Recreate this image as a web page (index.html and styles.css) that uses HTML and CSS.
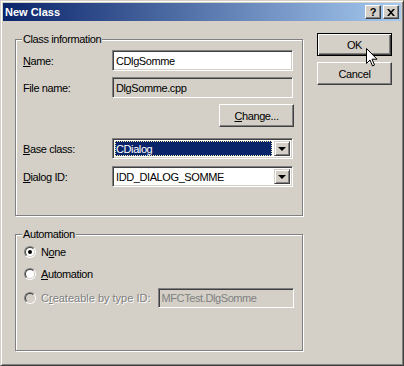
FILE: index.html
```html
<!DOCTYPE html>
<html lang="en">
<head>
    <meta charset="UTF-8">
    <meta name="viewport" content="width=device-width, initial-scale=1.0">
    <title>New Class</title>
    <link rel="stylesheet" href="styles.css">
</head>
<body>
    <div class="window">
        <div class="titlebar">
            <span class="title">New Class</span>
            <div class="caption-buttons">
                <span class="cap-btn help">?</span>
                <span class="cap-btn">
                    <svg width="8" height="7" viewBox="0 0 8 7"><path d="M0 0h2l2 2.3 2-2.3h2l-3 3.5 3 3.5h-2l-2-2.3-2 2.3h-2l3-3.5z" fill="#000"/></svg>
                </span>
            </div>
        </div>
        <div class="client">
            <div class="main">
                <fieldset class="group class-info">
                    <legend>Class information</legend>
                    <div class="row">
                        <span class="label"><u>N</u>ame:</span>
                        <div class="edit">CDlgSomme</div>
                    </div>
                    <div class="row row-file">
                        <span class="label">File name:</span>
                        <div class="edit readonly">DlgSomme.cpp</div>
                    </div>
                    <div class="row row-change">
                        <span class="button"><u>C</u>hange...</span>
                    </div>
                    <div class="row row-base">
                        <span class="label"><u>B</u>ase class:</span>
                        <div class="combo">
                            <span class="combo-text selected">CDialog</span>
                            <span class="drop-btn"><span class="arrow"></span></span>
                        </div>
                    </div>
                    <div class="row row-dialog">
                        <span class="label"><u>D</u>ialog ID:</span>
                        <div class="combo">
                            <span class="combo-text">IDD_DIALOG_SOMME</span>
                            <span class="drop-btn"><span class="arrow"></span></span>
                        </div>
                    </div>
                </fieldset>

                <fieldset class="group automation">
                    <legend>Automation</legend>
                    <div class="option">
                        <span class="radio"><span class="ring checked"></span></span>
                        <span>N<u>o</u>ne</span>
                    </div>
                    <div class="option">
                        <span class="radio"><span class="ring"></span></span>
                        <span><u>A</u>utomation</span>
                    </div>
                    <div class="option disabled">
                        <span class="radio"><span class="ring"></span></span>
                        <span class="option-label">C<u>r</u>eateable by type ID:</span>
                        <div class="edit readonly type-id">MFCTest.DlgSomme</div>
                    </div>
                </fieldset>
            </div>

            <div class="side">
                <span class="button default">OK</span>
                <span class="button">Cancel</span>
            </div>
        </div>

        <svg class="cursor" width="12" height="20" viewBox="0 0 12 20">
            <path d="M0.5 0.5v15l3.5-3.5 2.5 6 2-1-2.5-5.8h5z" fill="#fff" stroke="#000" stroke-width="1"/>
        </svg>
    </div>
</body>
</html>
```

FILE: styles.css
```css
body {
    margin: 0;
    background-color: #d4d0c8;
    font-family: "Liberation Sans", Arial, sans-serif;
    font-size: 11px;
    letter-spacing: -0.4px;
    color: #000;
}
u {
    text-decoration: underline;
    text-underline-offset: 1px;
}

.window {
    position: relative;
    width: 404px;
    height: 366px;
    box-sizing: border-box;
    padding: 2px;
    border: 1px solid;
    border-color: #d4d0c8 #404040 #404040 #d4d0c8;
    box-shadow: inset 1px 1px #fff, inset -1px -1px #808080;
    background-color: #d4d0c8;
    display: flex;
    flex-direction: column;
}

/* title bar */
.titlebar {
    height: 18px;
    flex-shrink: 0;
    display: flex;
    align-items: center;
    justify-content: space-between;
    padding: 0 2px 0 2px;
    margin-bottom: 1px;
    background: linear-gradient(to right, #0a246a, #a6caf0);
}
.title {
    color: #fff;
    font-weight: bold;
    letter-spacing: 0;
}
.caption-buttons {
    display: flex;
    gap: 2px;
}
.cap-btn {
    width: 16px;
    height: 14px;
    box-sizing: border-box;
    border: 1px solid;
    border-color: #fff #404040 #404040 #fff;
    box-shadow: inset -1px -1px #808080, inset 1px 1px #d4d0c8;
    background-color: #d4d0c8;
    display: flex;
    align-items: center;
    justify-content: center;
    font-weight: bold;
    font-size: 11px;
    line-height: 12px;
}

/* client area */
.client {
    flex: 1;
    display: flex;
    align-items: flex-start;
    gap: 14px;
    padding: 11px 9px 0 12px;
}
.main {
    width: 288px;
    display: flex;
    flex-direction: column;
    gap: 12px;
}
.side {
    width: 75px;
    display: flex;
    flex-direction: column;
    gap: 6px;
}

/* group boxes */
.group {
    margin: 0;
    min-width: 0;
    border: 1px solid #808080;
    box-shadow: inset 1px 1px #fff, 1px 1px #fff;
}
.group legend {
    padding: 0 1px;
    margin-left: -1px;
    line-height: 13px;
    background-color: #d4d0c8;
}
.class-info {
    padding: 4px 8px 28px 7px;
}
.automation {
    padding: 0 8px 42px 7px;
}

.row {
    display: flex;
    align-items: center;
}
.label {
    width: 89px;
    flex-shrink: 0;
}
.row-file {
    margin-top: 6px;
}
.row-change {
    margin-top: 6px;
    justify-content: flex-end;
}
.row-base {
    margin-top: 11px;
}
.row-dialog {
    margin-top: 7px;
}

/* sunken edit box */
.edit {
    width: 181px;
    height: 21px;
    box-sizing: border-box;
    padding: 0 3px;
    border: 1px solid;
    border-color: #808080 #fff #fff #808080;
    box-shadow: inset 1px 1px #404040, inset -1px -1px #d4d0c8;
    background-color: #fff;
    display: flex;
    align-items: center;
}
.edit.readonly {
    background-color: #d4d0c8;
}

/* combo box */
.combo {
    width: 181px;
    height: 21px;
    box-sizing: border-box;
    padding: 2px;
    border: 1px solid;
    border-color: #808080 #fff #fff #808080;
    box-shadow: inset 1px 1px #404040, inset -1px -1px #d4d0c8;
    background-color: #fff;
    display: flex;
}
.combo-text {
    flex: 1;
    display: flex;
    align-items: center;
    padding-left: 1px;
    margin-right: 2px;
}
.combo-text.selected {
    background-color: #0a246a;
    color: #fff;
    outline: 1px dotted #f2eeb0;
    outline-offset: -1px;
}
.drop-btn {
    width: 16px;
    box-sizing: border-box;
    border: 1px solid;
    border-color: #d4d0c8 #404040 #404040 #d4d0c8;
    box-shadow: inset 1px 1px #fff, inset -1px -1px #808080;
    background-color: #d4d0c8;
    display: flex;
    align-items: center;
    justify-content: center;
}
.arrow {
    width: 0;
    height: 0;
    border-left: 4px solid transparent;
    border-right: 4px solid transparent;
    border-top: 4px solid #000;
    margin-top: 1px;
}

/* push buttons */
.button {
    width: 75px;
    height: 23px;
    box-sizing: border-box;
    border: 1px solid;
    border-color: #fff #404040 #404040 #fff;
    box-shadow: inset -1px -1px #808080, inset 1px 1px #d4d0c8;
    background-color: #d4d0c8;
    display: flex;
    align-items: center;
    justify-content: center;
}
.button.default {
    border-color: #000;
    box-shadow: inset 1px 1px #fff, inset -1px -1px #404040, inset -2px -2px #808080;
}

/* radio options */
.option {
    display: flex;
    align-items: center;
    gap: 5px;
    height: 20px;
    margin-top: 1px;
    padding-left: 1px;
}
.option + .option {
    margin-top: 2px;
}
.option.disabled {
    margin-top: 4px;
}
.radio {
    width: 12px;
    height: 12px;
    box-sizing: border-box;
    border-radius: 50%;
    border: 1px solid;
    border-color: #808080 #fff #fff #808080;
    flex-shrink: 0;
}
.ring {
    display: flex;
    align-items: center;
    justify-content: center;
    width: 10px;
    height: 10px;
    box-sizing: border-box;
    border-radius: 50%;
    border: 1px solid;
    border-color: #404040 #d4d0c8 #d4d0c8 #404040;
    background-color: #fff;
}
.ring.checked::after {
    content: "";
    width: 4px;
    height: 4px;
    border-radius: 50%;
    background-color: #000;
}
.disabled {
    color: #808080;
    text-shadow: 1px 1px #fff;
}
.disabled .ring {
    background-color: #d4d0c8;
}
.option-label {
    width: 112px;
    letter-spacing: 0;
}
.type-id {
    width: 137px;
    height: 20px;
    text-shadow: none;
    letter-spacing: -0.4px;
}

.cursor {
    position: absolute;
    left: 365px;
    top: 47px;
}
```
